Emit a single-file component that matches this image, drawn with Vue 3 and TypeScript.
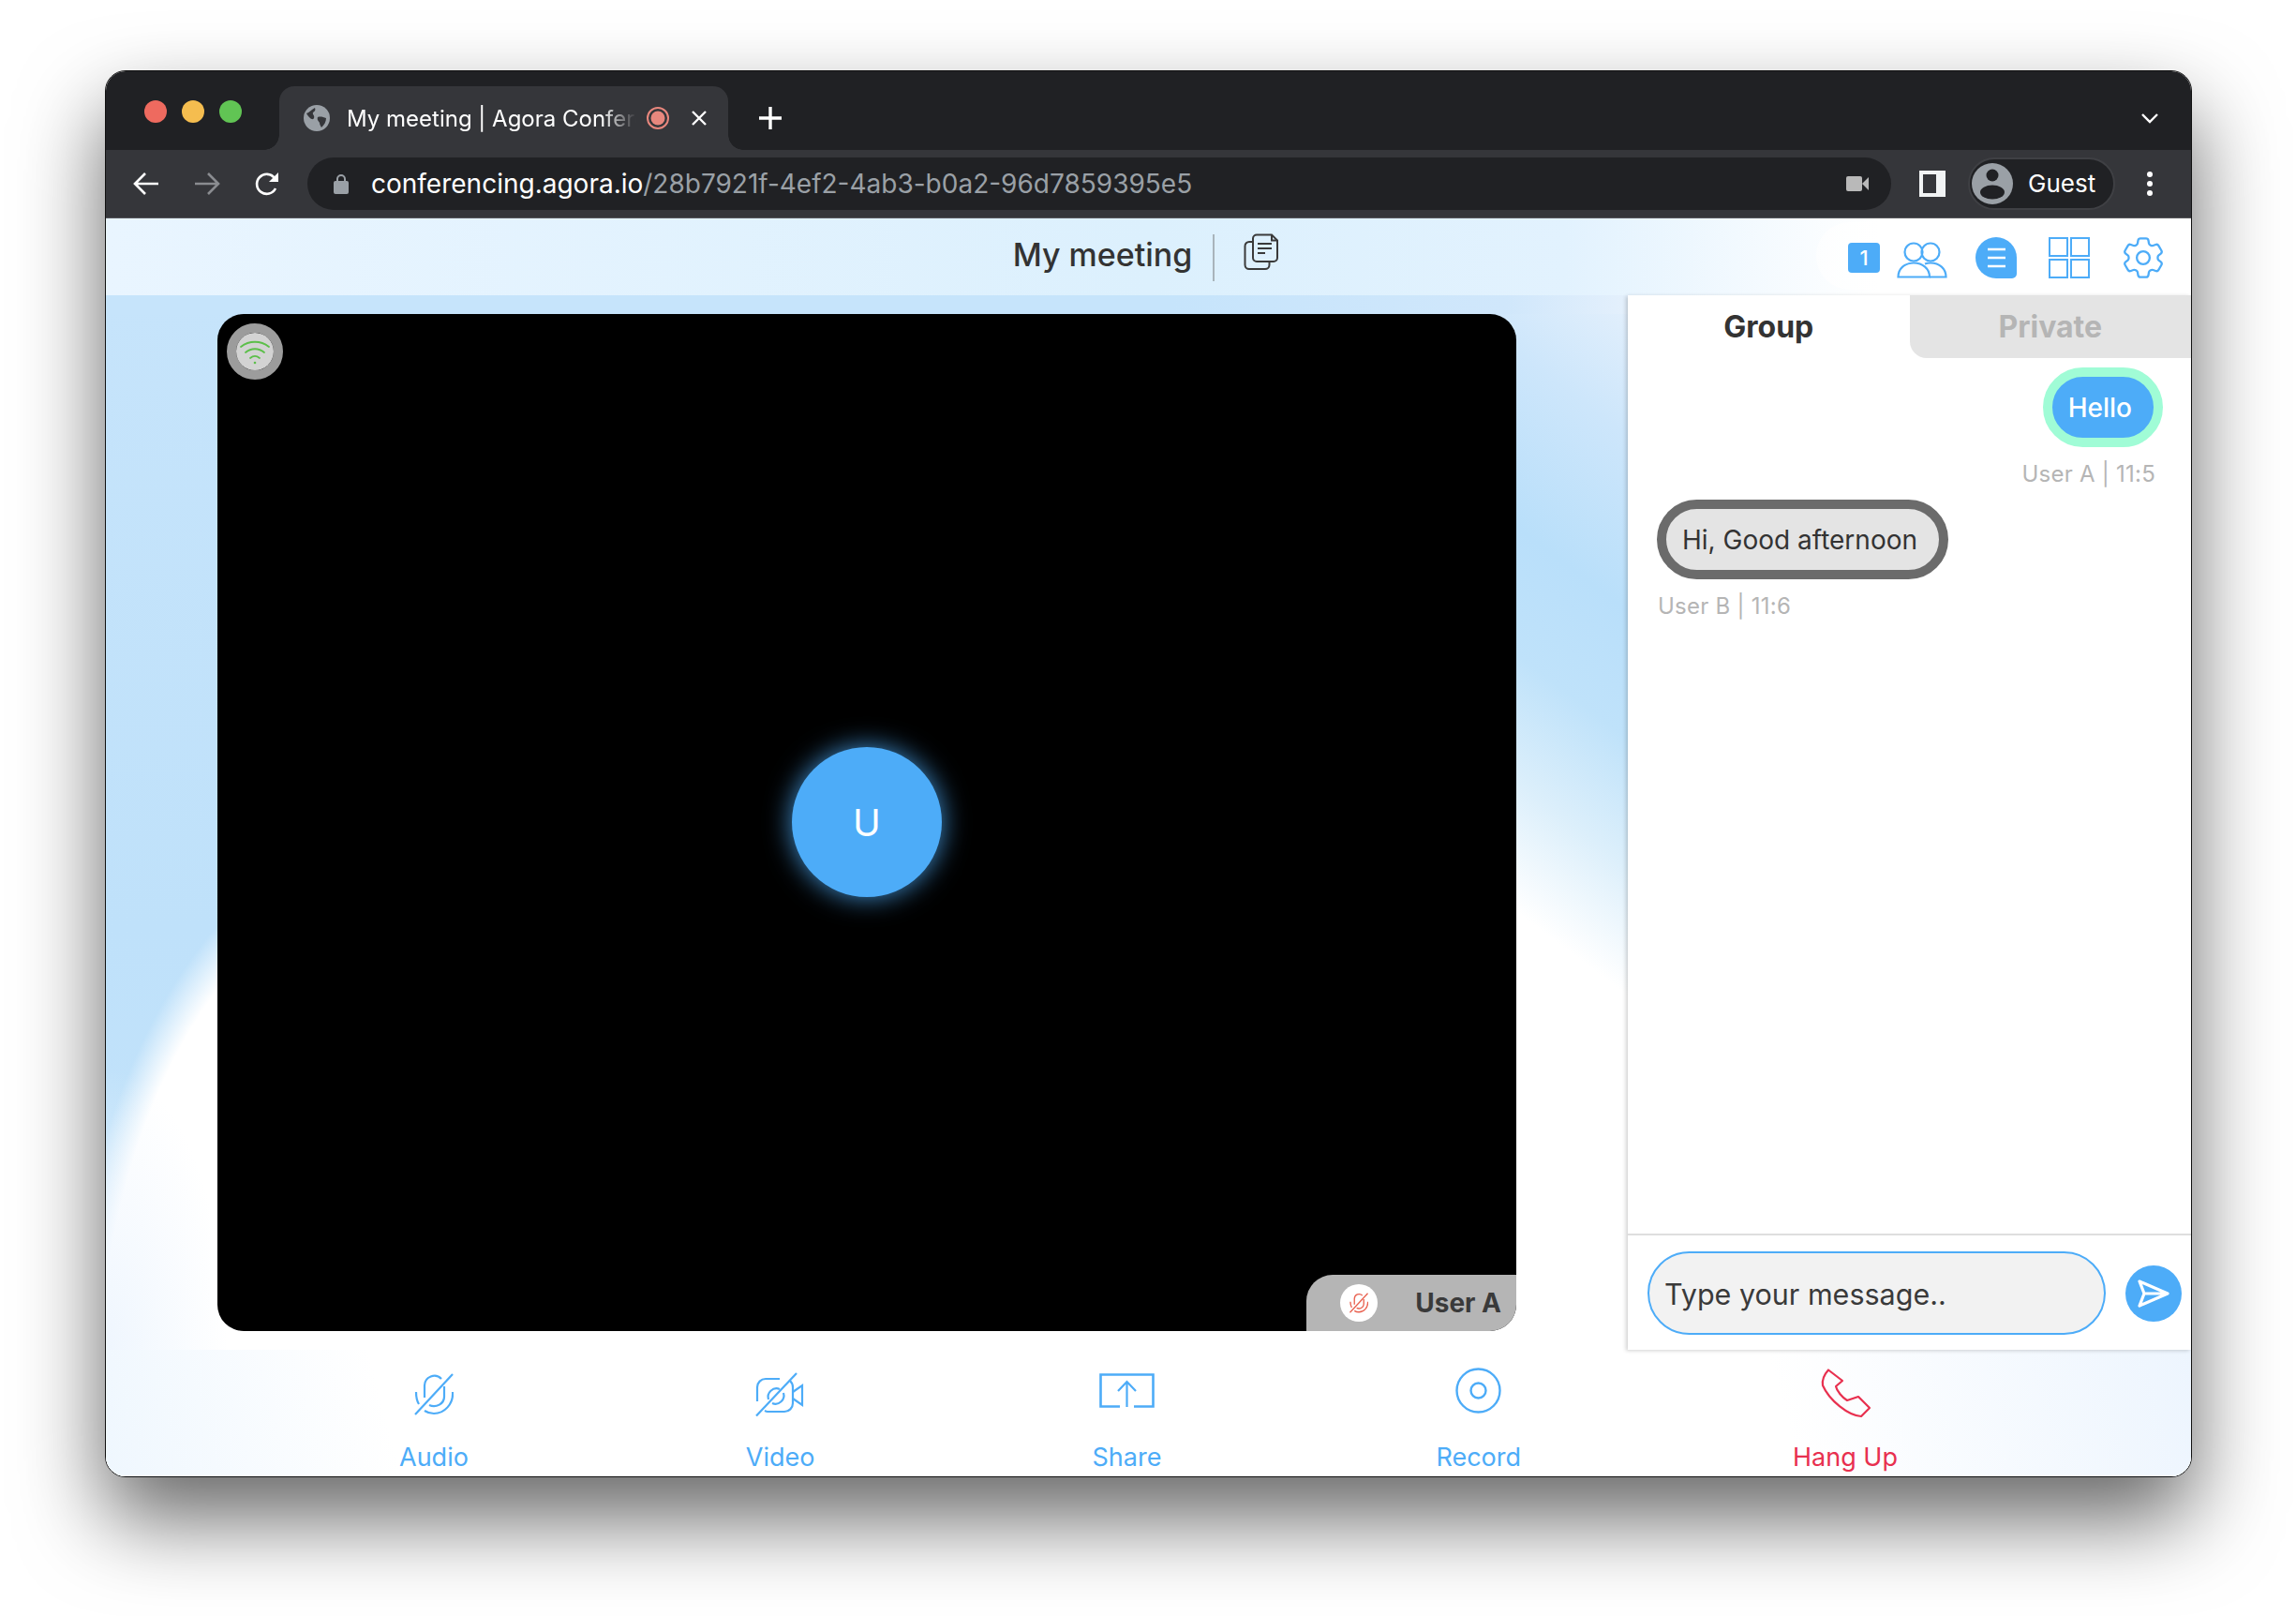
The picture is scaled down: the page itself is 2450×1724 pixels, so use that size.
<template>
  <div class="page">
    <div class="window">
      <div class="tabstrip">
        <div class="lights">
          <span class="light red"></span>
          <span class="light yellow"></span>
          <span class="light green"></span>
        </div>
        <div class="tab">
          <svg class="globe" viewBox="0 0 28 28">
            <circle cx="14" cy="14" r="14" fill="#9aa0a6" />
            <path d="M3 9c3-1 5-4 9-6 1 2 0 4-2 5-1 2 2 3 1 6-1 2-3 1-4 0-2-2-3-3-4-5zM15 13c3-1 6 0 9 1 0 4-2 7-5 10-1-2-2-3-2-5-1-2-3-3-2-6z" fill="#35363a" />
          </svg>
          <span class="tab-title">My meeting | Agora Conference</span>
          <svg class="rec" viewBox="0 0 24 24">
            <circle cx="12" cy="12" r="11" fill="none" stroke="#e8877d" stroke-width="2" />
            <circle cx="12" cy="12" r="7.5" fill="#e8877d" />
          </svg>
          <svg class="tab-x" viewBox="0 0 18 18">
            <path d="M2 2l14 14M16 2L2 16" stroke="#fff" stroke-width="2.4" />
          </svg>
        </div>
        <svg class="plus" viewBox="0 0 24 24">
          <path d="M12 0v24M0 12h24" stroke="#fff" stroke-width="3.4" />
        </svg>
        <svg class="chevron" viewBox="0 0 18 11">
          <path d="M1 1l8 8 8-8" fill="none" stroke="#fff" stroke-width="2.4" />
        </svg>
      </div>

      <div class="toolbar">
        <svg class="nav back" viewBox="0 0 28 26">
          <path d="M27 13H3M13 2L2 13l11 11" fill="none" stroke="#fff" stroke-width="2.6" />
        </svg>
        <svg class="nav forward" viewBox="0 0 28 26">
          <path d="M1 13h24M15 2l11 11-11 11" fill="none" stroke="#8a8c90" stroke-width="2.6" />
        </svg>
        <svg class="nav reload" viewBox="0 0 28 28">
          <path d="M23 19a10.500 10.500 0 1 1-1-11" fill="none" stroke="#fff" stroke-width="2.6" />
          <path d="M26 2v10H16z" fill="#fff" />
        </svg>
        <div class="omnibox">
          <svg class="lock" viewBox="0 0 16 22">
            <path d="M4 9V6a4 4 0 0 1 8 0v3" fill="none" stroke="#9aa0a6" stroke-width="2" />
            <rect x="0" y="8" width="16" height="14" rx="2" fill="#9aa0a6" />
          </svg>
          <span class="url"><b>conferencing.agora.io</b>/28b7921f-4ef2-4ab3-b0a2-96d7859395e5</span>
          <svg class="cam" viewBox="0 0 24 16">
            <rect x="0" y="0" width="17" height="16" rx="2" fill="#b9b9b9" />
            <path d="M17 8l7-7v14z" fill="#b9b9b9" />
          </svg>
        </div>
        <svg class="sidepanel" viewBox="0 0 28 28">
          <rect width="28" height="28" fill="#f1f3f4" />
          <rect x="4" y="4" width="14" height="20" fill="#35363a" />
        </svg>
        <div class="guest">
          <svg class="guest-ava" viewBox="0 0 44 44">
            <circle cx="22" cy="22" r="22" fill="#9aa0a6" />
            <circle cx="22" cy="13" r="6.500" fill="#202124" />
            <ellipse cx="22" cy="31" rx="13" ry="7.500" fill="#202124" />
          </svg>
          <span>Guest</span>
        </div>
        <div class="dots"><i></i><i></i><i></i></div>
      </div>

      <div class="app">
        <header class="head">
          <div></div>
          <div class="head-title">
            <h1>My meeting</h1>
            <span class="rule"></span>
            <svg class="copy" viewBox="0 0 37 40">
              <path d="M10 9H6a4.500 4.500 0 0 0-4.500 4.500v20A4.500 4.500 0 0 0 6 38h17a4.500 4.500 0 0 0 4.500-4.500V31" fill="none" stroke="#3a3a3a" stroke-width="2" />
              <path d="M14 1.500h16l6 6V26a4 4 0 0 1-4 4H14a4 4 0 0 1-4-4V5.500a4 4 0 0 1 4-4z" fill="none" stroke="#3a3a3a" stroke-width="2" />
              <path d="M30 1.500v6h6" fill="none" stroke="#3a3a3a" stroke-width="2" />
              <path d="M15 11h15M15 16h15M15 21h8" stroke="#3a3a3a" stroke-width="2" />
            </svg>
          </div>
          <div class="head-tools">
            <span class="count">1</span>
            <svg class="users" viewBox="0 0 54 39">
              <circle cx="18" cy="11" r="9.500" fill="none" stroke="#4dacf8" stroke-width="2.200" />
              <circle cx="36" cy="11" r="9.500" fill="none" stroke="#4dacf8" stroke-width="2.200" />
              <path d="M1.500 37.500c0-9 7-15 16.500-15s17 6 17 15z" fill="none" stroke="#4dacf8" stroke-width="2.200" />
              <path d="M30 23.500c2-.700 4-1 6-1 9.500 0 16.500 6 16.500 15H35" fill="none" stroke="#4dacf8" stroke-width="2.200" />
            </svg>
            <svg class="bubble" viewBox="0 0 44 44">
              <path d="M22 0a22 22 0 0 1 22 22v17a5 5 0 0 1-5 5H22a22 22 0 0 1 0-44z" fill="#4dacf8" />
              <path d="M13 13h19M13 22h19M13 31h19" stroke="#fff" stroke-width="2.600" />
            </svg>
            <svg class="layout" viewBox="0 0 44 44">
              <rect x="1" y="1" width="19" height="19" fill="none" stroke="#4dacf8" stroke-width="2" />
              <rect x="24" y="1" width="19" height="19" fill="none" stroke="#4dacf8" stroke-width="2" />
              <rect x="1" y="24" width="19" height="19" fill="none" stroke="#4dacf8" stroke-width="2" />
              <rect x="24" y="24" width="19" height="19" fill="none" stroke="#4dacf8" stroke-width="2" />
            </svg>
            <svg class="gear" viewBox="2.600 2.400 18.800 19.200">
              <path d="M9.594 3.940c.09-.542.56-.94 1.110-.94h2.593c.55 0 1.020.398 1.110.94l.213 1.281c.063.374.313.686.645.870.074.040.147.083.22.127.325.196.72.257 1.075.124l1.217-.456a1.125 1.125 0 0 1 1.370.49l1.296 2.247a1.125 1.125 0 0 1-.26 1.431l-1.003.827c-.293.241-.438.613-.43.992a7.723 7.723 0 0 1 0 .255c-.008.378.137.75.43.991l1.004.827c.424.35.534.955.26 1.430l-1.298 2.247a1.125 1.125 0 0 1-1.369.491l-1.217-.456c-.355-.133-.75-.072-1.076.124a6.470 6.470 0 0 1-.22.128c-.331.183-.581.495-.644.869l-.213 1.281c-.09.543-.56.94-1.110.94h-2.594c-.55 0-1.019-.398-1.110-.94l-.213-1.281c-.062-.374-.312-.686-.644-.870a6.520 6.520 0 0 1-.22-.127c-.325-.196-.72-.257-1.076-.124l-1.217.456a1.125 1.125 0 0 1-1.369-.49l-1.297-2.247a1.125 1.125 0 0 1 .26-1.431l1.004-.827c.292-.24.437-.613.43-.991a6.932 6.932 0 0 1 0-.255c.007-.38-.138-.751-.43-.992l-1.004-.827a1.125 1.125 0 0 1-.26-1.430l1.297-2.247a1.125 1.125 0 0 1 1.370-.491l1.216.456c.356.133.751.072 1.076-.124.072-.044.146-.086.22-.128.332-.183.582-.495.644-.869l.214-1.280z" fill="none" stroke="#4dacf8" stroke-width="1" />
              <circle cx="12" cy="12" r="3" fill="none" stroke="#4dacf8" stroke-width="1" />
            </svg>
          </div>
        </header>

        <div class="stage">
          <section class="video-wrap">
            <div class="video">
              <div class="signal">
                <svg viewBox="0 0 40 40">
                  <circle cx="20" cy="20" r="20" fill="#d3d3d3" />
                  <path d="M5 15c9-7 21-7 30 0M10 21c6-5 14-5 20 0M15 27c3-2.500 7-2.500 10 0" fill="none" stroke="#5cbf4a" stroke-width="1.800" stroke-linecap="round" />
                  <circle cx="20" cy="32" r="1.300" fill="#5cbf4a" />
                </svg>
              </div>
              <div class="avatar">U</div>
              <div class="nametag">
                <span class="tag-mic">
                  <svg viewBox="0 0 42 45">
                    <path d="M1 44L41 1" stroke="#e9604f" stroke-width="2.800" />
                    <path d="M11 26V13A10.500 10.500 0 0 1 29 6M32 14v11a11 10 0 0 1-16 9M2 20c0 5 .5 9 3 13M41 20c1 13-9 23-20 23-4 0-7-1-10-3" fill="none" stroke="#e9604f" stroke-width="2.800" />
                  </svg>
                </span>
                <span class="tag-name">User A</span>
              </div>
            </div>
          </section>

          <aside class="chat">
            <div class="chat-tabs">
              <div class="chat-tab active">Group</div>
              <div class="chat-tab">Private</div>
            </div>
            <div class="messages">
              <div v-for="m in messages" :key="m.id" class="msg" :class="{ mine: m.mine }">
                <div class="msg-bubble">{{ m.text }}</div>
                <div class="msg-meta">{{ m.meta }}</div>
              </div>
            </div>
            <div class="composer">
              <div class="input">Type your message..</div>
              <button class="send">
                <svg viewBox="0 0 34 30">
                  <path d="M2 2l30 13L2 28l5-13zM7 15h25" fill="none" stroke="#fff" stroke-width="3.200" stroke-linejoin="round" />
                </svg>
              </button>
            </div>
          </aside>
        </div>

        <footer class="controls">
          <div class="ctl">
            <svg class="ic-audio" viewBox="0 0 42 45">
              <path d="M1 44L41 1" stroke="#4dacf8" stroke-width="2.200" />
              <path d="M11 26V13A10.500 10.500 0 0 1 29 6M32 14v11a11 10 0 0 1-16 9M2 20c0 5 .5 9 3 13M41 20c1 13-9 23-20 23-4 0-7-1-10-3" fill="none" stroke="#4dacf8" stroke-width="2.200" />
            </svg>
            <span>Audio</span>
          </div>
          <div class="ctl">
            <svg class="ic-video" viewBox="0 0 52 47">
              <path d="M1 46.500L44 1" stroke="#4dacf8" stroke-width="2.200" />
              <path d="M26 7H11a9 9 0 0 0-9 9v15M10 41c1 .5 2 1 3 1h18a9 9 0 0 0 9-9V16c0-3-1-5-3-7" fill="none" stroke="#4dacf8" stroke-width="2.200" />
              <path d="M26 18a9 9 0 0 0-12 11M18 33a9 9 0 0 0 12-11" fill="none" stroke="#4dacf8" stroke-width="2.200" />
              <path d="M40 21l10-7v21l-10-7" fill="none" stroke="#4dacf8" stroke-width="2.200" />
            </svg>
            <span>Video</span>
          </div>
          <div class="ctl">
            <svg class="ic-share" viewBox="0 0 59 37">
              <path d="M22 35.500H1.500V1.500h56v34H37" fill="none" stroke="#4dacf8" stroke-width="2.600" />
              <path d="M29.500 36V9M20 19l9.500-10 9.500 10" fill="none" stroke="#4dacf8" stroke-width="2.200" />
            </svg>
            <span>Share</span>
          </div>
          <div class="ctl record">
            <svg class="ic-record" viewBox="0 0 49 49">
              <circle cx="24.500" cy="24.500" r="23" fill="none" stroke="#4dacf8" stroke-width="2.400" />
              <circle cx="24.500" cy="24.500" r="8" fill="none" stroke="#4dacf8" stroke-width="2.400" />
            </svg>
            <span>Record</span>
          </div>
          <div class="ctl hangup">
            <svg class="ic-hang" viewBox="0 0 55 53">
              <path d="M9 1.500L24 13l-7 6c1 5 7 12 12 15l12-4 12 12-9 9C30 50 10 34 3 18 2 12 5 6 9 1.500z" fill="none" stroke="#e8304f" stroke-width="2.200" stroke-linejoin="round" />
            </svg>
            <span>Hang Up</span>
          </div>
        </footer>
      </div>
    </div>
  </div>
</template>

<script setup lang="ts">
interface Message {
  id: number;
  text: string;
  meta: string;
  mine: boolean;
}

const messages: Message[] = [
  { id: 1, text: 'Hello', meta: 'User A | 11:5', mine: true },
  { id: 2, text: 'Hi, Good afternoon', meta: 'User B | 11:6', mine: false },
];
</script>

<style>
html, body {
  margin: 0;
  background: #fff;
}
</style>

<style scoped>
.page {
  width: 2450px;
  height: 1724px;
  padding: 75px 0 0 112px;
  box-sizing: border-box;
  overflow: hidden;
  font-family: Inter, 'Noto Sans', sans-serif;
}

.window {
  width: 2227px;
  height: 1501px;
  box-sizing: border-box;
  border: 1px solid #111;
  border-radius: 22px;
  display: flex;
  flex-direction: column;
  box-shadow: 0 44px 90px rgba(0, 0, 0, 0.6);
  overflow: hidden;
  background: #fff;
}

.tabstrip {
  height: 84px;
  flex: none;
  background: #202124;
  display: flex;
  align-items: flex-end;
  position: relative;
  padding-left: 185px;
}

.lights {
  position: absolute;
  left: 41px;
  top: 31px;
  display: flex;
  gap: 16px;
}

.light {
  width: 24px;
  height: 24px;
  border-radius: 50%;
}

.red { background: #ee6a5f; }
.yellow { background: #f5bd4f; }
.green { background: #61c454; }

.tab {
  width: 479px;
  height: 68px;
  background: #35363a;
  border-radius: 16px 16px 0 0;
  display: flex;
  align-items: center;
  padding: 0 24px 0 26px;
  box-sizing: border-box;
  position: relative;
}

.tab::before,
.tab::after {
  content: '';
  position: absolute;
  bottom: 0;
  width: 16px;
  height: 16px;
}

.tab::before {
  left: -16px;
  background: radial-gradient(circle at 0 0, transparent 15.5px, #35363a 16px);
}

.tab::after {
  right: -16px;
  background: radial-gradient(circle at 100% 0, transparent 15.5px, #35363a 16px);
}

.globe {
  width: 28px;
  height: 28px;
  flex: none;
}

.tab-title {
  color: #fff;
  font-size: 24px;
  margin-left: 18px;
  width: 309px;
  flex: none;
  white-space: nowrap;
  overflow: hidden;
  -webkit-mask-image: linear-gradient(90deg, #000 88%, transparent);
  mask-image: linear-gradient(90deg, #000 88%, transparent);
}

.rec {
  width: 24px;
  height: 24px;
  flex: none;
  margin-left: 11px;
}

.tab-x {
  width: 18px;
  height: 18px;
  flex: none;
  margin-left: 23px;
}

.plus {
  width: 24px;
  height: 24px;
  margin: 0 0 22px 33px;
}

.chevron {
  width: 18px;
  height: 11px;
  position: absolute;
  right: 35px;
  top: 45px;
}

.toolbar {
  height: 73px;
  flex: none;
  box-sizing: border-box;
  background: #35363a;
  border-bottom: 1px solid #55565a;
  display: flex;
  align-items: center;
  padding: 0 0 1px 29px;
}

.nav {
  flex: none;
}

.back, .forward {
  width: 28px;
  height: 26px;
}

.forward {
  margin-left: 37px;
}

.reload {
  width: 28px;
  height: 28px;
  margin-left: 36px;
}

.omnibox {
  width: 1690px;
  height: 56px;
  margin-left: 29px;
  flex: none;
  background: #202124;
  border-radius: 28px;
  display: flex;
  align-items: center;
  padding: 0 24px 0 28px;
  box-sizing: border-box;
}

.lock {
  width: 16px;
  height: 22px;
  flex: none;
}

.url {
  margin-left: 24px;
  font-size: 28px;
  padding-top: 1px;
  color: #9aa0a6;
  flex: 1;
  white-space: nowrap;
}

.url b {
  color: #fff;
  font-weight: 400;
}

.cam {
  width: 24px;
  height: 16px;
  flex: none;
}

.sidepanel {
  width: 28px;
  height: 28px;
  margin-left: 30px;
  flex: none;
}

.guest {
  width: 157px;
  height: 56px;
  margin-left: 24px;
  flex: none;
  box-sizing: border-box;
  background: #202124;
  border: 2px solid #3f4044;
  border-radius: 28px;
  display: flex;
  align-items: center;
  padding-left: 2px;
  color: #fff;
  font-size: 26px;
}

.guest-ava {
  width: 44px;
  height: 44px;
  margin-right: 16px;
  flex: none;
}

.dots {
  margin-left: 34px;
  display: flex;
  flex-direction: column;
  gap: 4px;
}

.dots i {
  width: 6px;
  height: 6px;
  border-radius: 50%;
  background: #fff;
}

.app {
  flex: 1;
  display: flex;
  flex-direction: column;
  min-height: 0;
  background: #fff;
}

.head {
  height: 82px;
  flex: none;
  display: grid;
  grid-template-columns: 1fr auto 1fr;
  align-items: center;
  background: linear-gradient(90deg, #e9f5ff 0%, #dcf0fd 50%, #e2f2fe 70%, #fff 85%);
}

.head-title {
  display: flex;
  align-items: center;
  margin-bottom: 4px;
  padding-right: 6px;
}

.head-title h1 {
  margin: 0;
  font-size: 34px;
  font-weight: 500;
  color: #333;
  line-height: 1;
}

.rule {
  width: 2px;
  height: 50px;
  background: #a9b4bb;
  margin: 6px 31px 0 22px;
}

.copy {
  width: 37px;
  height: 40px;
  margin-bottom: 6px;
}

.head-tools {
  justify-self: end;
  height: 72px;
  margin-bottom: 2px;
  padding: 3px 29px 0 34px;
  box-sizing: border-box;
  border-radius: 36px 0 0 36px;
  background: linear-gradient(90deg, rgba(255, 255, 255, 0.6), #fff 30%);
  display: flex;
  align-items: center;
}

.count {
  width: 34px;
  height: 32px;
  border-radius: 4px;
  background: #4dacf8;
  color: #fff;
  font-size: 22px;
  font-weight: 500;
  display: flex;
  align-items: center;
  justify-content: center;
}

.users {
  width: 54px;
  height: 39px;
  margin: 6px 30px 0 18px;
}

.bubble, .layout, .gear {
  width: 44px;
  height: 44px;
}

.layout {
  margin: 0 35px 0 34px;
}

.stage {
  height: 1125px;
  flex: none;
  display: flex;
}

.video-wrap {
  width: 1624px;
  flex: none;
  box-sizing: border-box;
  padding: 20px 119px;
  background-color: #fff;
  background-repeat: no-repeat;
  background-image:
    linear-gradient(90deg, #c6e4fb 0%, #c6e4fb 70%, #d0e7fb 92%, #e4f0fc 100%),
    radial-gradient(ellipse 130px 300px at 0 100%, #eff6fe, rgba(239, 246, 254, 0)),
    radial-gradient(ellipse 372px 617px at 330px 1180px, #fff 91%, rgba(255, 255, 255, 0) 100%),
    linear-gradient(180deg, #c6e4fb 0%, #bfe1fa 60%, #c3e3fa 100%),
    linear-gradient(217deg, #e4f0fc 0%, #cde6fb 12%, #b9dffa 27%, #bfe2fa 38%, #dceffb 49%, #fff 60%);
  background-size: 100% 20px, 160px 1125px, 160px 1125px, 160px 1125px, 160px 1125px;
  background-position: 0 0, 0 0, 0 0, 0 0, 100% 0;
}

.video {
  height: 1085px;
  background: #000;
  border-radius: 28px;
  display: flex;
  align-items: center;
  justify-content: center;
  position: relative;
}

.signal {
  position: absolute;
  left: 10px;
  top: 10px;
  width: 40px;
  height: 40px;
  border: 10px solid #9c9c9c;
  border-radius: 50%;
}

.signal svg {
  display: block;
  width: 40px;
  height: 40px;
}

.avatar {
  width: 160px;
  height: 160px;
  margin-bottom: 1px;
  border-radius: 50%;
  background: #4dacf8;
  box-shadow: 0 0 28px rgba(77, 172, 248, 0.85);
  color: #fff;
  font-size: 40px;
  display: flex;
  align-items: center;
  justify-content: center;
}

.nametag {
  position: absolute;
  right: 0;
  bottom: 0;
  width: 224px;
  height: 60px;
  background: #b5b5b5;
  border-radius: 28px 0 28px 0;
  display: flex;
  align-items: center;
  box-sizing: border-box;
  padding: 0 16px 0 36px;
}

.tag-mic {
  width: 40px;
  height: 40px;
  background: #fff;
  border-radius: 50%;
  display: flex;
  align-items: center;
  justify-content: center;
}

.tag-mic svg {
  width: 20px;
  height: 22px;
}

.tag-name {
  margin-left: auto;
  font-size: 28px;
  font-weight: 700;
  color: #3a3a3a;
}

.chat {
  width: 601px;
  flex: none;
  position: relative;
  z-index: 1;
  background: #fff;
  display: flex;
  flex-direction: column;
  box-shadow: -2px 1px 4px rgba(0, 0, 0, 0.18);
}

.chat-tabs {
  display: flex;
  height: 67px;
  flex: none;
}

.chat-tab {
  flex: 1;
  display: flex;
  align-items: center;
  justify-content: center;
  font-size: 32px;
  font-weight: 700;
  color: #b5b5b5;
  background: #e4e4e4;
  border-bottom-left-radius: 18px;
}

.chat-tab.active {
  color: #333;
  background: #fff;
  border-radius: 0;
}

.messages {
  flex: 1;
  padding: 10px 30px 0 31px;
}

.msg {
  display: flex;
  flex-direction: column;
  align-items: flex-start;
  margin-bottom: 14px;
}

.msg.mine {
  align-items: flex-end;
}

.msg-bubble {
  height: 65px;
  padding: 0 23px 0 17px;
  border: 10px solid #6b6b6b;
  border-radius: 43px;
  background: #e4e4e4;
  color: #333;
  font-size: 28px;
  display: flex;
  align-items: center;
}

.mine .msg-bubble {
  background: #4dacf8;
  border-color: #a0fcd6;
  color: #fff;
  font-weight: 500;
}

.msg-meta {
  margin-top: 15px;
  margin-bottom: -1px;
  font-size: 24px;
  line-height: 28px;
  letter-spacing: 0.25px;
  color: #b5b5b5;
  padding-left: 1px;
}

.mine .msg-meta {
  padding-right: 8px;
}

.composer {
  height: 124px;
  flex: none;
  box-sizing: border-box;
  border-top: 2px solid #dedede;
  display: flex;
  align-items: flex-start;
  padding: 17px 0 0 21px;
}

.input {
  width: 489px;
  height: 89px;
  box-sizing: border-box;
  border: 2px solid #4dacf8;
  border-radius: 45px;
  background: #f2f2f2;
  color: #3a3a3a;
  font-size: 30.5px;
  display: flex;
  align-items: center;
  padding: 1px 0 0 16px;
}

.send {
  width: 60px;
  height: 60px;
  margin: 15px 0 0 21px;
  padding: 0;
  border: none;
  border-radius: 50%;
  background: #4dacf8;
  display: flex;
  align-items: center;
  justify-content: center;
}

.send svg {
  width: 34px;
  height: 30px;
}

.controls {
  flex: 1;
  display: flex;
  gap: 296px;
  padding-left: 313px;
  background: linear-gradient(75deg, #eff7fe 0%, #fff 14%, #fff 80%, #edf5fe 100%);
}

.ctl {
  position: relative;
  height: 135px;
  display: flex;
  flex-direction: column;
  align-items: center;
  justify-content: flex-end;
  color: #4dacf8;
  font-size: 27px;
}

.ctl span {
  line-height: 34px;
  margin-bottom: 3px;
}

.ctl svg {
  position: absolute;
}

.record {
  margin-left: -3px;
}

.hangup {
  color: #e8304f;
  margin-left: -6px;
}

.ic-audio { width: 42px; height: 45px; top: 25px; }
.ic-video { width: 52px; height: 47px; top: 24px; margin-left: -1px; }
.ic-share { width: 59px; height: 37px; top: 25px; }
.ic-record { width: 49px; height: 49px; top: 19px; }
.ic-hang { width: 55px; height: 53px; top: 20px; }
</style>
